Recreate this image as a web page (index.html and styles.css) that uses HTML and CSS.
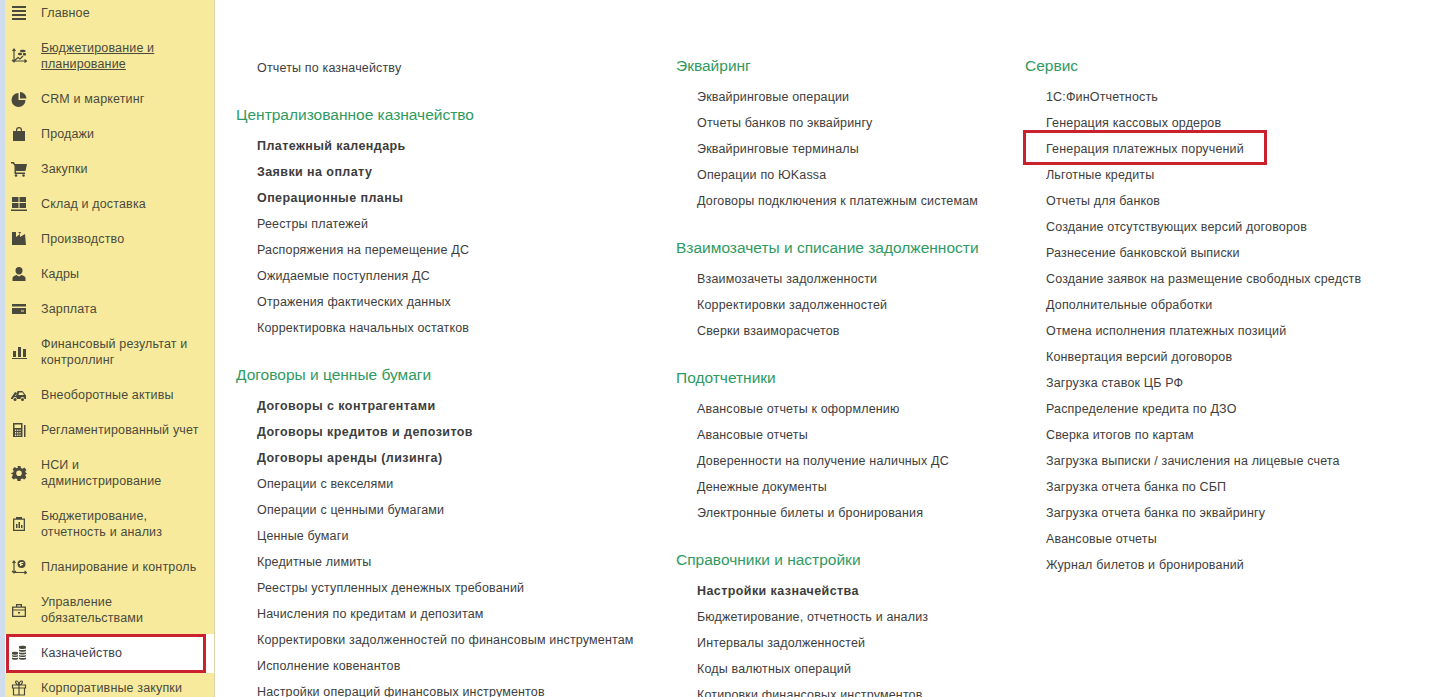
FILE: index.html
```html
<!DOCTYPE html>
<html lang="en">
<head>
  <meta charset="UTF-8" />
  <title>Казначейство</title>
  <meta name="viewport" content="width=device-width, initial-scale=1" />
  <link rel="stylesheet" href="styles.css">
</head>
<body>
  <nav class="sidebar">
    <a class="nav-item"><svg class="nav-icon" viewBox="0 0 16 16"><path d="M1 1h14v2H1zM1 5h14v2H1zM1 9h14v2H1zM1 13h14v2H1z"/></svg><span>Главное</span></a>
    <a class="nav-item two-line"><svg class="nav-icon" viewBox="0 0 16 16"><path class="line" d="M3 1v13M1.500 3L3 1l1.500 2M1 12l2 2 2-2M2 13h13M13.500 11.500l2 1.500-2 1.500M3 13l4-3.500 2 1.500 3-3"/><path d="M9 2.500c0-1 5.500-1 5.500 0v1c0 1-5.500 1-5.500 0zM7 5.500c0-1 4-1 4 0v1c0 1-4 1-4 0zM12 5.500c0-.8 3-.8 3 0v1.500c0 .8-3 .8-3 0z"/></svg><span class="underlined">Бюджетирование и планирование</span></a>
    <a class="nav-item"><svg class="nav-icon" viewBox="0 0 16 16"><path d="M7.500 2v7h7A7 7 0 1 1 7.500 2zM9 1a6.500 6.500 0 0 1 6.500 6.500H9z"/></svg><span>CRM и маркетинг</span></a>
    <a class="nav-item"><svg class="nav-icon" viewBox="0 0 16 16"><path d="M2 5h3V4a3 3 0 0 1 6 0v1h3v10H2zM6.200 5h3.600V4a1.800 1.800 0 0 0-3.600 0z" fill-rule="evenodd"/></svg><span>Продажи</span></a>
    <a class="nav-item"><svg class="nav-icon" viewBox="0 0 16 16"><path d="M0 1h3l1 2h12l-1.500 7H5v1.500h9V13H3.500V5L2 2.500H0z"/><circle cx="5" cy="14.500" r="1.300"/><circle cx="12.500" cy="14.500" r="1.300"/></svg><span>Закупки</span></a>
    <a class="nav-item"><svg class="nav-icon" viewBox="0 0 16 16"><path d="M1 1h6.500v5H1zM8.500 1H15v5H8.500zM1 7h6.500v5H1zM8.500 7H15v5H8.500zM0 13.500h16V15H0z"/></svg><span>Склад и доставка</span></a>
    <a class="nav-item"><svg class="nav-icon" viewBox="0 0 16 16"><path d="M1 1h4v5l4-3v3l5-3 1 11H1zM7 1h3L9 3z"/></svg><span>Производство</span></a>
    <a class="nav-item"><svg class="nav-icon" viewBox="0 0 16 16"><path d="M8 1a3.500 3.500 0 0 1 3.500 3.500c0 2-1 4-3.500 4s-3.500-2-3.500-4A3.500 3.500 0 0 1 8 1zM5.500 9L8 10.500 10.500 9c2 .5 4 1.500 4 3v3h-13v-3c0-1.500 2-2.500 4-3z"/></svg><span>Кадры</span></a>
    <a class="nav-item"><svg class="nav-icon" viewBox="0 0 16 16"><path d="M1 3h14v2.500H1zM1 7h14v6H1zM10 9.500v1h3v-1z" fill-rule="evenodd"/></svg><span>Зарплата</span></a>
    <a class="nav-item two-line"><svg class="nav-icon" viewBox="0 0 16 16"><path d="M2 7h3v6H2zM7 3h3v10H7zM12 5h3v8h-3zM1 14h15v1H1z"/></svg><span>Финансовый результат и контроллинг</span></a>
    <a class="nav-item"><svg class="nav-icon" viewBox="0 0 16 16"><path d="M0 11l4-6 2 1-2 3h1l1.500-5h5L15 8.500V12h-1.500a2 2 0 0 0-4 0H6a2 2 0 0 0-4 0H0zM8 5.500L7.500 8H13l-1.500-2.500z" fill-rule="evenodd"/><circle cx="4" cy="12.500" r="1.500"/><circle cx="11.500" cy="12.500" r="1.500"/></svg><span>Внеоборотные активы</span></a>
    <a class="nav-item"><svg class="nav-icon" viewBox="0 0 16 16"><path d="M2 1h9.500v14H2zM3.500 2.500V6H10V2.500zM4 7.500v1.500h1.200V7.500zM6.200 7.500v1.500h1.200V7.500zM8.400 7.500v1.500h1.200V7.500zM4 10v1.500h1.200V10zM6.200 10v1.500h1.200V10zM8.400 10v1.500h1.200V10zM4 12.500V14h1.200v-1.500zM6.200 12.500V14h1.200v-1.500zM8.400 12.500V14h1.200v-1.500z" fill-rule="evenodd"/><path d="M13 3h1.500v12H13z"/></svg><span>Регламентированный учет</span></a>
    <a class="nav-item two-line"><svg class="nav-icon" viewBox="0 0 16 16"><path d="M6.500 1h3l.4 2 1.600.7L13.300 2.600l2.100 2.100-1.100 1.800.7 1.600 2 .4v0l-2 .6-.7 1.500 1.100 1.800-2.100 2.100-1.800-1.100-1.600.7-.4 2h-3l-.4-2-1.600-.7-1.800 1.100-2.100-2.100 1.100-1.800L1.500 9 0 8.500V8l2-.4.7-1.600-1.100-1.800 2.100-2.100 1.800 1.100 1.600-.7zM8 5.500a2.800 2.800 0 1 0 0 5.600 2.800 2.800 0 0 0 0-5.600z" fill-rule="evenodd"/></svg><span>НСИ и<br>администрирование</span></a>
    <a class="nav-item two-line"><svg class="nav-icon" viewBox="0 0 16 16"><path d="M5 1h6v1.500h3V15H2V2.500h3zM3.300 3.800v9.900h9.400V3.800zM5 8h1.500v4H5zM7.500 6H9v6H7.500zM10 9h1.500v3H10z" fill-rule="evenodd"/></svg><span>Бюджетирование, отчетность и анализ</span></a>
    <a class="nav-item"><svg class="nav-icon" viewBox="0 0 16 16"><path class="line" d="M3 2v12M1.500 4L3 2l1.500 2M1 12l2 2 2-2M2 13.500h13M13.500 12l2 1.500-2 1.500"/><path d="M10.500 1a4 4 0 1 1 0 8 4 4 0 0 1 0-8zM9 3v1H8v1h1v2h1.500V6H12V5h-1.500V4H12c1 0 1-1 0-1z" fill-rule="evenodd"/></svg><span>Планирование и контроль</span></a>
    <a class="nav-item two-line"><svg class="nav-icon" viewBox="0 0 16 16"><path d="M5 2h6v2.500h4V15H1V4.500h4zM6.300 3.200v1.300h3.400V3.200zM2.300 5.800V7.500h11.400V5.800zM2.300 8.500v5.200h11.400V8.500zM7 10h2v1.500H7z" fill-rule="evenodd"/></svg><span>Управление обязательствами</span></a>
    <a class="nav-item active"><svg class="nav-icon" viewBox="0 0 16 16"><path d="M8 1.500c0-1 7-1 7 0v1.800c0 1-7 1-7 0zM8 4.500c1 .7 6 .7 7 0v1.500c0 1-7 1-7 0zM8 7.200c1 .7 6 .7 7 0v1.500c0 1-7 1-7 0zM1 7.500c0-1 6-1 6 0V9c0 1-6 1-6 0zM1 10c1 .7 5 .7 6 0v1.300c0 1-6 1-6 0zM8 10c1 .7 6 .7 7 0v1.300c0 1-7 1-7 0zM1 12.500c1 .7 5 .7 6 0V14c0 1-6 1-6 0zM8 12.500c1 .7 6 .7 7 0V14c0 1-7 1-7 0z"/></svg><span>Казначейство</span></a>
    <a class="nav-item"><svg class="nav-icon" viewBox="0 0 16 16"><path class="line" d="M1.500 5h13v3h-13zM2.500 8v7h11V8M8 5v10M8 5C5 5 3.500 1 5.500 1S8 5 8 5zM8 5c3 0 4.500-4 2.500-4S8 5 8 5z"/></svg><span>Корпоративные закупки</span></a>
  </nav>

  <main class="content">
    <div class="column first">
      <a class="link">Отчеты по казначейству</a>

      <h2>Централизованное казначейство</h2>
      <a class="link strong">Платежный календарь</a>
      <a class="link strong">Заявки на оплату</a>
      <a class="link strong">Операционные планы</a>
      <a class="link">Реестры платежей</a>
      <a class="link">Распоряжения на перемещение ДС</a>
      <a class="link">Ожидаемые поступления ДС</a>
      <a class="link">Отражения фактических данных</a>
      <a class="link">Корректировка начальных остатков</a>

      <h2>Договоры и ценные бумаги</h2>
      <a class="link strong">Договоры с контрагентами</a>
      <a class="link strong">Договоры кредитов и депозитов</a>
      <a class="link strong">Договоры аренды (лизинга)</a>
      <a class="link">Операции с векселями</a>
      <a class="link">Операции с ценными бумагами</a>
      <a class="link">Ценные бумаги</a>
      <a class="link">Кредитные лимиты</a>
      <a class="link">Реестры уступленных денежных требований</a>
      <a class="link">Начисления по кредитам и депозитам</a>
      <a class="link">Корректировки задолженностей по финансовым инструментам</a>
      <a class="link">Исполнение ковенантов</a>
      <a class="link">Настройки операций финансовых инструментов</a>
    </div>

    <div class="column">
      <h2>Эквайринг</h2>
      <a class="link">Эквайринговые операции</a>
      <a class="link">Отчеты банков по эквайрингу</a>
      <a class="link">Эквайринговые терминалы</a>
      <a class="link">Операции по ЮKassa</a>
      <a class="link">Договоры подключения к платежным системам</a>

      <h2>Взаимозачеты и списание задолженности</h2>
      <a class="link">Взаимозачеты задолженности</a>
      <a class="link">Корректировки задолженностей</a>
      <a class="link">Сверки взаиморасчетов</a>

      <h2>Подотчетники</h2>
      <a class="link">Авансовые отчеты к оформлению</a>
      <a class="link">Авансовые отчеты</a>
      <a class="link">Доверенности на получение наличных ДС</a>
      <a class="link">Денежные документы</a>
      <a class="link">Электронные билеты и бронирования</a>

      <h2>Справочники и настройки</h2>
      <a class="link strong">Настройки казначейства</a>
      <a class="link">Бюджетирование, отчетность и анализ</a>
      <a class="link">Интервалы задолженностей</a>
      <a class="link">Коды валютных операций</a>
      <a class="link">Котировки финансовых инструментов</a>
    </div>

    <div class="column">
      <h2>Сервис</h2>
      <a class="link">1С:ФинОтчетность</a>
      <a class="link">Генерация кассовых ордеров</a>
      <a class="link marked">Генерация платежных поручений</a>
      <a class="link">Льготные кредиты</a>
      <a class="link">Отчеты для банков</a>
      <a class="link">Создание отсутствующих версий договоров</a>
      <a class="link">Разнесение банковской выписки</a>
      <a class="link">Создание заявок на размещение свободных средств</a>
      <a class="link">Дополнительные обработки</a>
      <a class="link">Отмена исполнения платежных позиций</a>
      <a class="link">Конвертация версий договоров</a>
      <a class="link">Загрузка ставок ЦБ РФ</a>
      <a class="link">Распределение кредита по ДЗО</a>
      <a class="link">Сверка итогов по картам</a>
      <a class="link">Загрузка выписки / зачисления на лицевые счета</a>
      <a class="link">Загрузка отчета банка по СБП</a>
      <a class="link">Загрузка отчета банка по эквайрингу</a>
      <a class="link">Авансовые отчеты</a>
      <a class="link">Журнал билетов и бронирований</a>
    </div>
  </main>
</body>
</html>
```

FILE: styles.css
```css
html, body {
  height: 100%;
}
body {
  font-family: "Liberation Sans", Arial, sans-serif;
  font-size: 12.5px;
  background: #fff;
  margin: 0;
  color: #3d3d3d;
  display: flex;
  overflow: hidden;
}
.sidebar {
  width: 215px;
  height: 697px;
  flex-shrink: 0;
  box-sizing: border-box;
  padding-left: 5px;
  background: #f8ea9c;
  border-right: 1px solid #d9d3a8;
  box-shadow: inset 5px 0 0 #cfdcee;
  overflow: hidden;
}
.nav-item {
  display: flex;
  align-items: center;
  flex-shrink: 0;
  height: 35px;
  padding-left: 6px;
  gap: 14px;
  color: #4a4a3c;
  letter-spacing: 0.15px;
  line-height: 16px;
  position: relative;
}
.nav-item:first-child {
  margin-top: -5px;
}
.nav-item.two-line {
  height: 51px;
}
.nav-icon {
  width: 16px;
  height: 16px;
  flex-shrink: 0;
  fill: #4a4a3c;
}
.nav-icon .line {
  fill: none;
  stroke: #4a4a3c;
  stroke-width: 1.2;
}
.underlined {
  text-decoration: underline;
}
.nav-item.active {
  box-sizing: border-box;
  height: 39px;
  margin: -1px -1px -3px 0;
  padding-bottom: 2px;
  background: #fff;
  color: #3c4050;
}
.nav-item.active::after {
  content: "";
  position: absolute;
  left: 1px;
  right: 9px;
  top: 0;
  bottom: 0;
  border: 3px solid #c9222e;
}
.content {
  flex: 1;
  display: grid;
  grid-template-columns: 440px 349px 1fr;
  align-items: start;
  padding: 56px 0 0 21px;
}
.column.first {
  margin-top: -1px;
}
h2 {
  margin: 24px 0 8px;
  height: 20px;
  line-height: 20px;
  font-size: 15.5px;
  font-weight: normal;
  color: #2f9a5f;
}
.column h2:first-child {
  margin-top: 0;
}
.link {
  display: block;
  height: 26px;
  line-height: 26px;
  padding-left: 21px;
  white-space: nowrap;
  position: relative;
  letter-spacing: 0.16px;
}
.strong {
  font-weight: bold;
  letter-spacing: 0.42px;
}
.marked::after {
  content: "";
  position: absolute;
  left: -2px;
  top: -6px;
  width: 244px;
  height: 35px;
  box-sizing: border-box;
  border: 3px solid #c9222e;
}
```
